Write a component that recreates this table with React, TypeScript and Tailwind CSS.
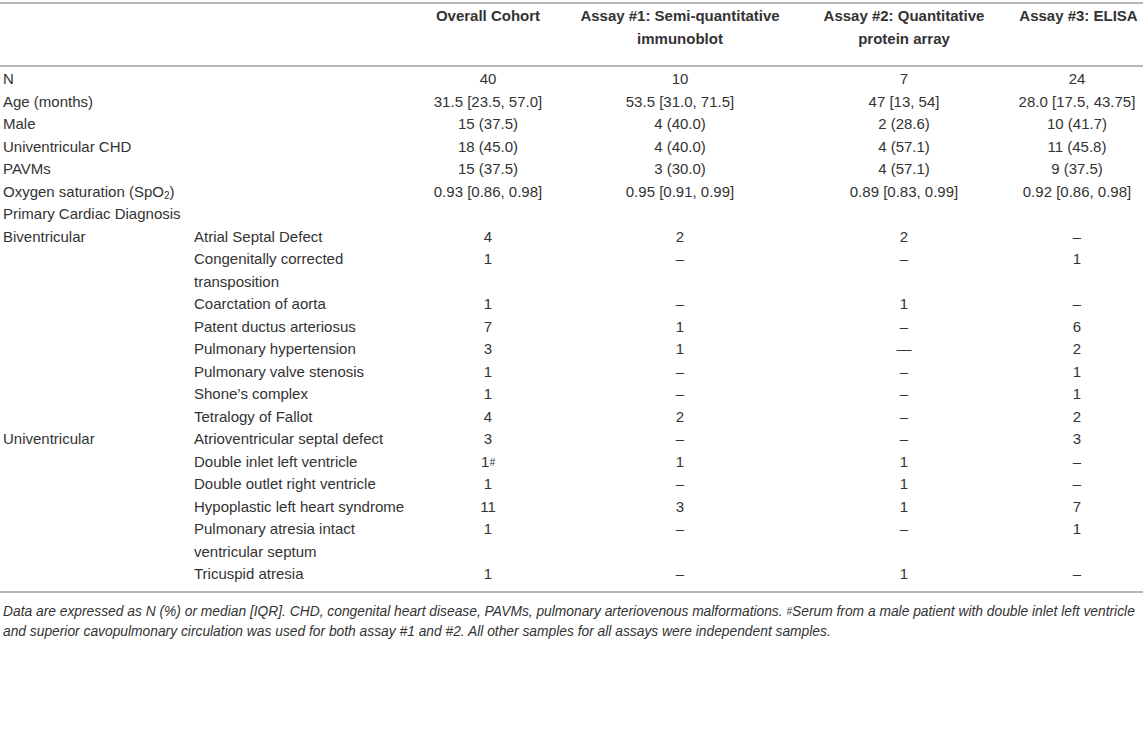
import React from 'react';

type Row = {
  group?: string;
  label: string;
  values: React.ReactNode[];
};

const SUMMARY: Row[] = [
  { label: 'N', values: ['40', '10', '7', '24'] },
  { label: 'Age (months)', values: ['31.5 [23.5, 57.0]', '53.5 [31.0, 71.5]', '47 [13, 54]', '28.0 [17.5, 43.75]'] },
  { label: 'Male', values: ['15 (37.5)', '4 (40.0)', '2 (28.6)', '10 (41.7)'] },
  { label: 'Univentricular CHD', values: ['18 (45.0)', '4 (40.0)', '4 (57.1)', '11 (45.8)'] },
  { label: 'PAVMs', values: ['15 (37.5)', '3 (30.0)', '4 (57.1)', '9 (37.5)'] },
  {
    label: 'Oxygen saturation (SpO2)',
    values: ['0.93 [0.86, 0.98]', '0.95 [0.91, 0.99]', '0.89 [0.83, 0.99]', '0.92 [0.86, 0.98]'],
  },
];

const DIAGNOSES: Row[] = [
  { group: 'Biventricular', label: 'Atrial Septal Defect', values: ['4', '2', '2', '–'] },
  { label: 'Congenitally corrected transposition', values: ['1', '–', '–', '1'] },
  { label: 'Coarctation of aorta', values: ['1', '–', '1', '–'] },
  { label: 'Patent ductus arteriosus', values: ['7', '1', '–', '6'] },
  { label: 'Pulmonary hypertension', values: ['3', '1', '—', '2'] },
  { label: 'Pulmonary valve stenosis', values: ['1', '–', '–', '1'] },
  { label: 'Shone’s complex', values: ['1', '–', '–', '1'] },
  { label: 'Tetralogy of Fallot', values: ['4', '2', '–', '2'] },
  { group: 'Univentricular', label: 'Atrioventricular septal defect', values: ['3', '–', '–', '3'] },
  {
    label: 'Double inlet left ventricle',
    values: [
      <>
        1<sup className="text-[10px] italic relative -top-[1px]">#</sup>
      </>,
      '1',
      '1',
      '–',
    ],
  },
  { label: 'Double outlet right ventricle', values: ['1', '–', '1', '–'] },
  { label: 'Hypoplastic left heart syndrome', values: ['11', '3', '1', '7'] },
  { label: 'Pulmonary atresia intact ventricular septum', values: ['1', '–', '–', '1'] },
  { label: 'Tricuspid atresia', values: ['1', '–', '1', '–'] },
];

const cell = 'px-[3px] py-0 align-top leading-[22.5px]';

export default function App() {
  return (
    <div className="w-[1143px] h-[730px] bg-white text-[#333] font-['Liberation_Sans',Arial,sans-serif] text-[15px]">
      <table className="w-full table-fixed border-collapse mt-[2px]">
        <colgroup>
          <col className="w-[191px]" />
          <col className="w-[222px]" />
          <col className="w-[150px]" />
          <col className="w-[234px]" />
          <col className="w-[214px]" />
          <col className="w-[132px]" />
        </colgroup>
        <thead>
          <tr className="border-t-2 border-b-2 border-[#b5b5b5]">
            <th className={`${cell} pt-[1px] pb-[15px]`} />
            <th className={`${cell} pt-[1px] pb-[15px]`} />
            <th className={`${cell} pt-[1px] pb-[15px] text-center font-bold whitespace-nowrap`}>Overall Cohort</th>
            <th className={`${cell} pt-[1px] pb-[15px] text-center font-bold`}>
              Assay #1: Semi-quantitative immunoblot
            </th>
            <th className={`${cell} pt-[1px] pb-[15px] text-center font-bold`}>
              Assay #2: Quantitative protein array
            </th>
            <th className={`${cell} pt-[1px] pb-[15px] pr-0 text-center font-bold whitespace-nowrap`}>
              Assay #3: ELISA
            </th>
          </tr>
        </thead>
        <tbody>
          {SUMMARY.map((r, i) => (
            <tr key={r.label}>
              <td colSpan={2} className={`${cell} ${i === 0 ? 'pt-[1px]' : ''}`}>
                {r.label === 'Oxygen saturation (SpO2)' ? (
                  <>
                    Oxygen saturation (SpO<sub className="text-[10px]">2</sub>)
                  </>
                ) : (
                  r.label
                )}
              </td>
              {r.values.map((v, j) => (
                <td key={j} className={`${cell} text-center ${i === 0 ? 'pt-[1px]' : ''}`}>
                  {v}
                </td>
              ))}
            </tr>
          ))}
          <tr>
            <td colSpan={6} className={cell}>
              Primary Cardiac Diagnosis
            </td>
          </tr>
          {DIAGNOSES.map((r, i) => (
            <tr key={r.label}>
              <td className={cell}>{r.group ?? ''}</td>
              <td className={`${cell} ${i === DIAGNOSES.length - 1 ? 'pb-[6px]' : ''}`}>{r.label}</td>
              {r.values.map((v, j) => (
                <td key={j} className={`${cell} text-center`}>
                  {v}
                </td>
              ))}
            </tr>
          ))}
          <tr className="border-b-2 border-[#b5b5b5]" />
        </tbody>
      </table>
      <p className="px-[3px] pt-[9px] italic text-[13.8px] leading-[20px] text-[#333] whitespace-nowrap">
        <span className="block">
          Data are expressed as N (%) or median [IQR]. CHD, congenital heart disease, PAVMs, pulmonary arteriovenous
          malformations. <sup className="text-[10px] relative -top-[1px]">#</sup>Serum from a male patient with double
          inlet left ventricle
        </span>
        <span className="block">
          and superior cavopulmonary circulation was used for both assay #1 and #2. All other samples for all assays
          were independent samples.
        </span>
      </p>
    </div>
  );
}
